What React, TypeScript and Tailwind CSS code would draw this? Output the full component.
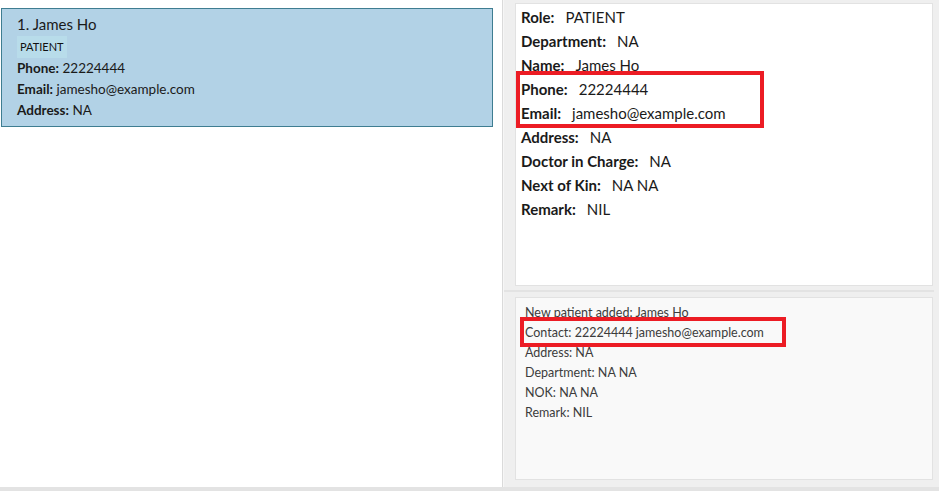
const font = "font-['Segoe_UI','Lato','Noto_Sans',sans-serif]"

function PersonCard() {
  return (
    <div className="ml-[1px] mt-2 w-[492px] border border-[#3e7d91] bg-[#b2d2e6] pb-[5px] pl-[15px] pt-[4px] text-[#1a1a1a]">
      <div className="text-[15px] leading-[22px]">1. James Ho</div>
      <div className="mt-[1px] flex">
        <span className="bg-[#b8dcea] px-[3px] text-[11px] leading-[22px] text-[#111]">PATIENT</span>
      </div>
      <div className="text-[13.5px] leading-[21px]">
        <b>Phone:</b> 22224444
      </div>
      <div className="text-[13.5px] leading-[21px]">
        <b>Email:</b> jamesho@example.com
      </div>
      <div className="text-[13.5px] leading-[21px]">
        <b>Address:</b> NA
      </div>
    </div>
  )
}

function Field({ label, value }: { label: string; value: string }) {
  return (
    <div className="flex h-6 items-center gap-[11px] text-[15px] text-[#1a1a1a]">
      <span className="font-bold">{label}</span>
      <span>{value}</span>
    </div>
  )
}

export default function App() {
  return (
    <div className={`flex h-[491px] w-[939px] flex-col overflow-hidden bg-white ${font}`}>
      <div className="flex h-[487px]">
        <section className="w-[503px] border-r border-[#dadada] bg-white">
          <PersonCard />
        </section>

        <section className="flex flex-1 flex-col border-l border-[#f6f6f6] bg-[#efefef] pl-[11px] pr-[5px]">
          <div className="relative mt-[3px] h-[283px] w-[418px] border border-[#e2e2e2] bg-white pl-[5px] pt-[1px]">
            <Field label="Role:" value="PATIENT" />
            <Field label="Department:" value="NA" />
            <Field label="Name:" value="James Ho" />
            <Field label="Phone:" value="22224444" />
            <Field label="Email:" value="jamesho@example.com" />
            <Field label="Address:" value="NA" />
            <Field label="Doctor in Charge:" value="NA" />
            <Field label="Next of Kin:" value="NA NA" />
            <Field label="Remark:" value="NIL" />
            <div className="absolute left-0 top-[67px] h-[57px] w-[248px] border-4 border-[#ec1c24]" />
          </div>

          <div className="-ml-[11px] mt-[4px] h-[2px] bg-[#e3e3e3]" />

          <div className="relative mt-[5px] h-[183px] w-[418px] border border-[#e2e2e2] bg-[#f9f9f9] pl-[9px] pt-[5px] text-[12.5px] leading-[20px] text-[#3c3c3c]">
            <div>New patient added: James Ho</div>
            <div>Contact: 22224444 jamesho@example.com</div>
            <div>Address: NA</div>
            <div>Department: NA NA</div>
            <div>NOK: NA NA</div>
            <div>Remark: NIL</div>
            <div className="absolute left-[4px] top-[19px] h-[30px] w-[266px] border-4 border-[#ec1c24]" />
          </div>
        </section>
      </div>
      <div className="h-[4px] bg-[#e3e3e3]" />
    </div>
  )
}
